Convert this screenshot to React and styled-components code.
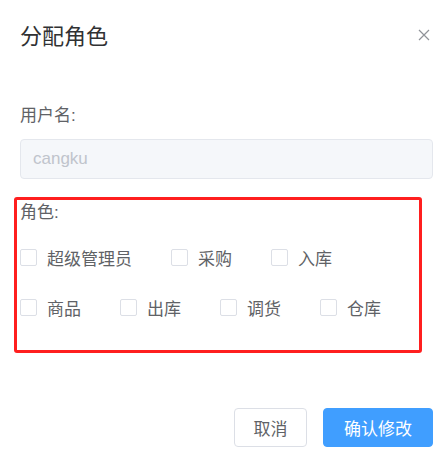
import styled, { createGlobalStyle } from "styled-components";

const GlobalStyle = createGlobalStyle`
    body {
        margin: 0;
        background: #ffffff;
        font-family: "Liberation Sans", "Noto Sans CJK SC", sans-serif;
    }
`

const Dialog = styled.div`
    width: 448px;
    box-sizing: border-box;
    padding: 25px 15px 18px 20px;
`

const Header = styled.div`
    display: flex;
    justify-content: space-between;
    align-items: center;
    height: 24px;
`

const Title = styled.span`
    font-size: 22px;
    line-height: 24px;
    color: #303133;
`

const Close = styled.button`
    display: flex;
    align-items: center;
    justify-content: center;
    width: 12px;
    height: 12px;
    padding: 0;
    margin: -4px 3px 0 0;
    border: none;
    background: none;
    color: #909399;
`

const Label = styled.div`
    font-size: 17px;
    line-height: 24px;
    color: #606266;
    margin-top: ${props => props.top || 0}px;
`

const Input = styled.input`
    display: block;
    box-sizing: border-box;
    width: 100%;
    height: 40px;
    margin-top: 11px;
    padding: 0 12px;
    border: 1px solid #e4e7ed;
    border-radius: 4px;
    background: #f5f7fa;
    color: #c0c4cc;
    font-family: inherit;
    font-size: 17px;
    outline: none;
`

const RoleBox = styled.div`
    margin: 18px 11px 0 -6px;
    padding: 1px 0 31px 3px;
    border: 3px solid #ff1f1f;
    border-radius: 3px;
`

const Row = styled.div`
    display: flex;
    align-items: center;
    height: 24px;
    margin-top: ${props => props.top}px;
`

const Item = styled.label`
    display: flex;
    align-items: center;
    flex-shrink: 0;
    min-width: 100px;
    padding-right: 39px;
    box-sizing: border-box;
    white-space: nowrap;
    font-size: 17px;
    color: #606266;
    cursor: pointer;
`

const Box = styled.span`
    width: 17px;
    height: 17px;
    box-sizing: border-box;
    border: 1px solid #dcdfe6;
    border-radius: 2px;
    background: #ffffff;
    margin-right: 10px;
    flex-shrink: 0;
`

const Footer = styled.div`
    display: flex;
    justify-content: flex-end;
    gap: 16px;
    margin-top: 55px;
`

const Button = styled.button`
    height: 39px;
    padding: 0;
    border-radius: 4px;
    font-family: inherit;
    font-size: 17px;
    width: ${props => props.width}px;
`

const CancelButton = styled(Button)`
    border: 1px solid #dcdfe6;
    background: #ffffff;
    color: #606266;
`

const ConfirmButton = styled(Button)`
    border: 1px solid #409eff;
    background: #409eff;
    color: #ffffff;
`

const rows = [
    ["超级管理员", "采购", "入库"],
    ["商品", "出库", "调货", "仓库"],
]

const App = () => {
    return (
        <Dialog>
            <GlobalStyle />
            <Header>
                <Title>分配角色</Title>
                <Close aria-label="close">
                    <svg width="12" height="12" viewBox="0 0 12 12">
                        <path d="M1 1L11 11M11 1L1 11" stroke="currentColor" strokeWidth="1.2" />
                    </svg>
                </Close>
            </Header>
            <Label top={55}>用户名:</Label>
            <Input value="cangku" disabled readOnly />
            <RoleBox>
                <Label>角色:</Label>
                {rows.map((row, i) => (
                    <Row key={i} top={i === 0 ? 20 : 26}>
                        {row.map(name => (
                            <Item key={name}>
                                <Box />
                                {name}
                            </Item>
                        ))}
                    </Row>
                ))}
            </RoleBox>
            <Footer>
                <CancelButton width={73}>取消</CancelButton>
                <ConfirmButton width={110}>确认修改</ConfirmButton>
            </Footer>
        </Dialog>
    );
}

export default App;
